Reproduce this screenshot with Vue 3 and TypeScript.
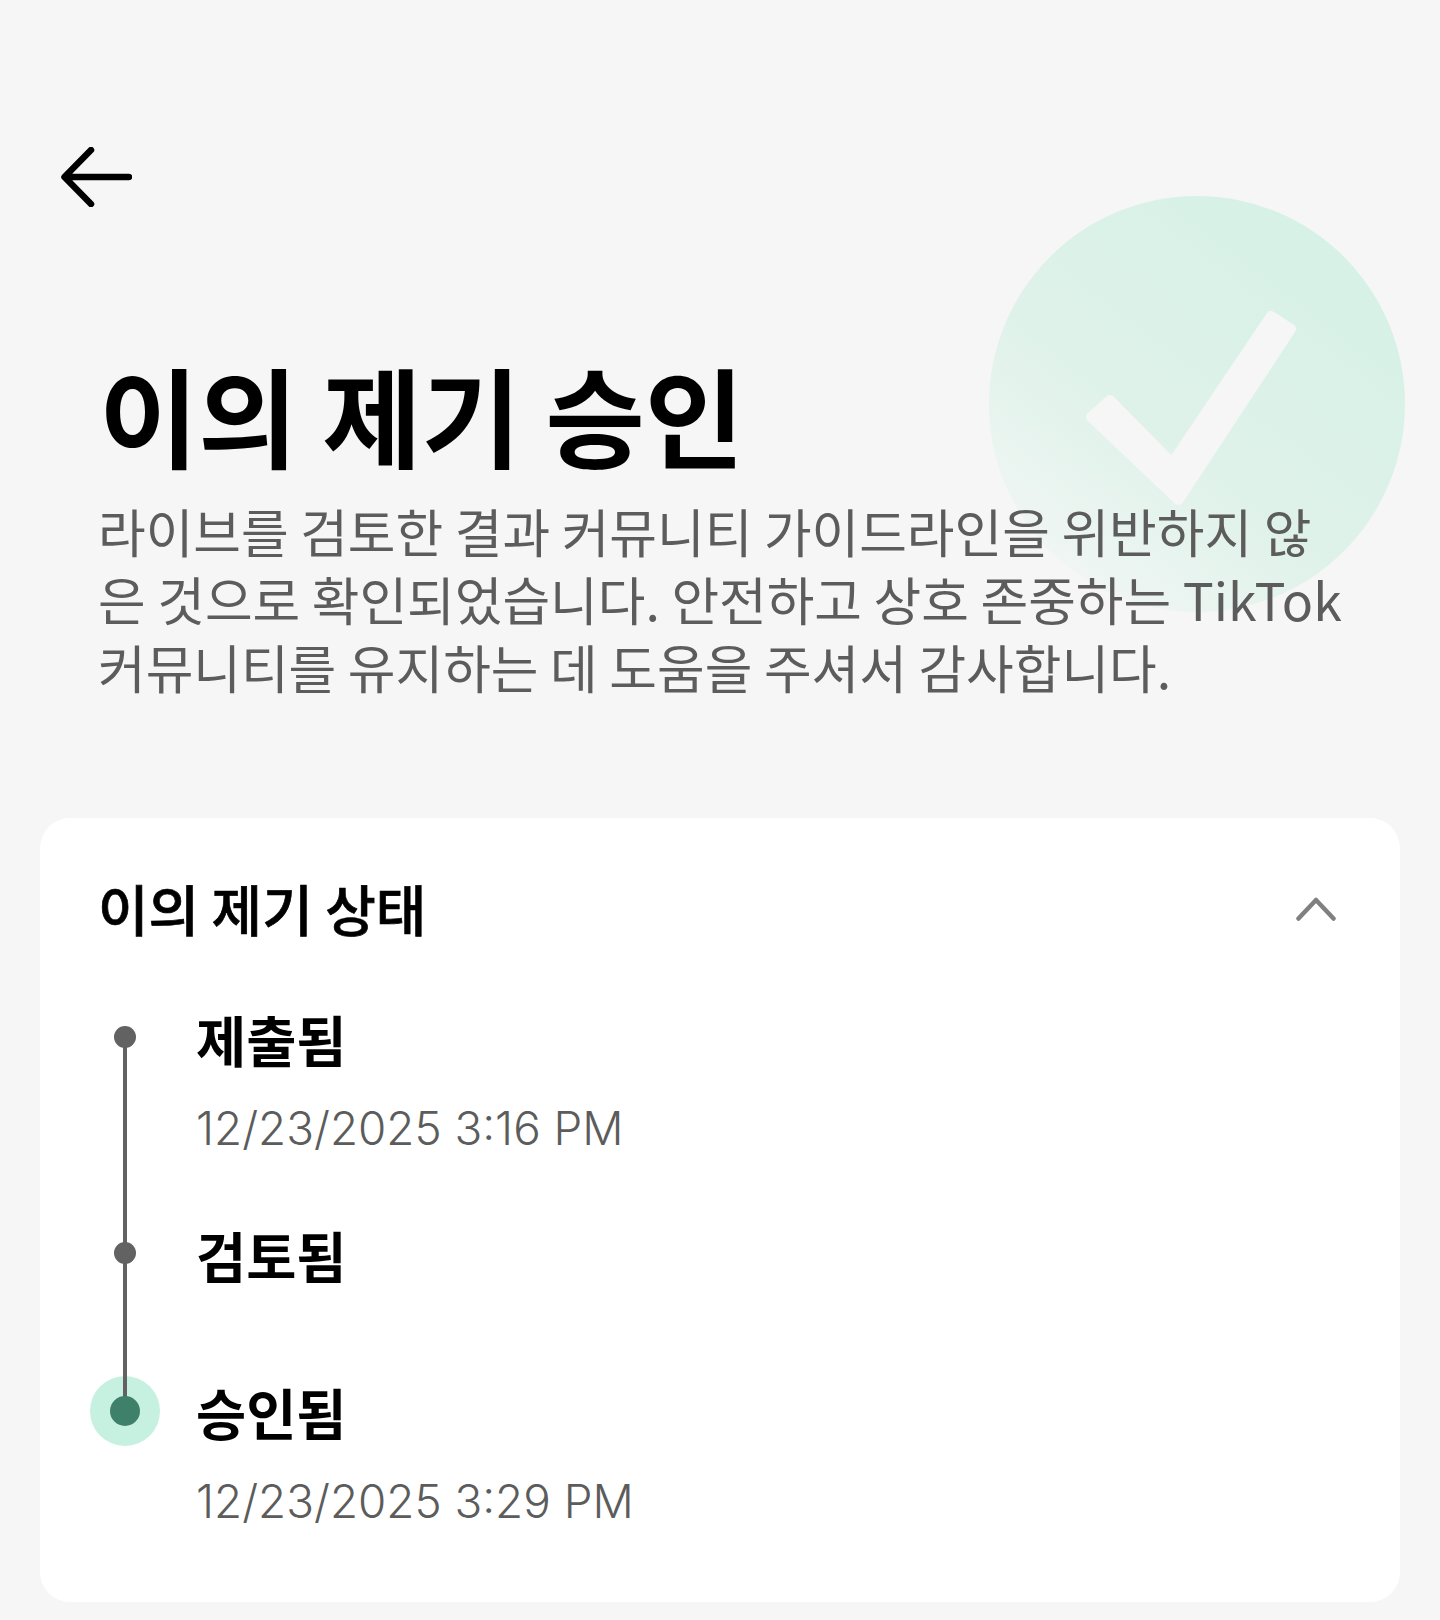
<script setup lang="ts">
interface Step {
  label: string;
  time?: string;
  current?: boolean;
}

const steps: Step[] = [
  { label: '제출됨', time: '12/23/2025 3:16 PM' },
  { label: '검토됨' },
  { label: '승인됨', time: '12/23/2025 3:29 PM', current: true },
];
</script>

<template>
  <main class="page">
    <svg class="watermark" viewBox="0 0 420 420" aria-hidden="true">
      <defs>
        <linearGradient id="wm" x1="0.85" y1="0.1" x2="0.2" y2="0.95">
          <stop offset="0" stop-color="#d6f1e6" />
          <stop offset="0.6" stop-color="#dff2ea" />
          <stop offset="1" stop-color="#f1f6f4" />
        </linearGradient>
      </defs>
      <circle cx="209" cy="209" r="208" fill="url(#wm)" />
      <polygon
        points="103,222 122,205 184,268 283,121 303,134 190.5,305"
        fill="#f6f6f6"
        stroke="#f6f6f6"
        stroke-width="10"
        stroke-linejoin="round"
      />
    </svg>

    <button class="back" type="button" aria-label="뒤로">
      <svg width="72" height="60" viewBox="0 0 72 60">
        <path
          d="M69 30 H5 M31 3 L4.5 30 L31 57"
          fill="none"
          stroke="#000"
          stroke-width="6.5"
          stroke-linecap="round"
          stroke-linejoin="round"
        />
      </svg>
    </button>

    <section class="hero">
      <h1 class="title">이의 제기 승인</h1>
      <p class="desc">
        라이브를 검토한 결과 커뮤니티 가이드라인을 위반하지 않은 것으로 확인되었습니다. 안전하고 상호 존중하는 TikTok 커뮤니티를 유지하는 데 도움을 주셔서 감사합니다.
      </p>
    </section>

    <section class="card">
      <header class="card-head">
        <h2 class="card-title">이의 제기 상태</h2>
        <svg class="chevron" width="40" height="24" viewBox="0 0 40 24">
          <path
            d="M2.5 21.5 L20 3 L37.5 21.5"
            fill="none"
            stroke="#808080"
            stroke-width="4.5"
            stroke-linecap="round"
            stroke-linejoin="round"
          />
        </svg>
      </header>

      <ol class="timeline">
        <li
          v-for="(step, i) in steps"
          :key="step.label"
          class="step"
          :class="{ 'has-time': step.time, current: step.current }"
        >
          <div class="marker">
            <span v-if="step.current" class="ring"></span>
            <span v-if="i < steps.length - 1" class="line"></span>
            <span class="dot"></span>
          </div>
          <div class="step-body">
            <div class="step-label">{{ step.label }}</div>
            <div v-if="step.time" class="step-time">{{ step.time }}</div>
          </div>
        </li>
      </ol>
    </section>
  </main>
</template>

<style scoped>
.page {
  position: relative;
  width: 1440px;
  height: 1620px;
  box-sizing: border-box;
  padding: 147px 40px 0;
  background: #f6f6f6;
  overflow: hidden;
  font-family: "Noto Sans CJK KR", "Noto Sans", sans-serif;
}

.watermark {
  position: absolute;
  left: 988px;
  top: 195px;
  width: 420px;
  height: 420px;
}

.back {
  display: block;
  position: relative;
  margin: 0 0 0 20px;
  padding: 0;
  height: 60px;
  border: 0;
  background: none;
}

.back svg {
  display: block;
}

.hero {
  position: relative;
  padding: 146px 58px 0;
}

.title {
  margin: 0 0 0 1px;
  font-size: 108px;
  line-height: 120px;
  font-weight: 700;
  color: #000;
}

.desc {
  margin: 24px 0 0;
  font-size: 51.8px;
  line-height: 68px;
  font-weight: 400;
  color: #5c5c5c;
}

.card {
  box-sizing: border-box;
  margin-top: 117px;
  height: 784px;
  padding: 54px 58px 70px;
  background: #fff;
  border-radius: 30px;
}

.card-head {
  display: flex;
  align-items: center;
  justify-content: space-between;
  height: 70px;
}

.card-title {
  margin: 0;
  font-size: 55px;
  line-height: 70px;
  font-weight: 500;
  -webkit-text-stroke: 0.7px #000;
  color: #000;
}

.chevron {
  margin: 4px 6px 0 0;
}

.timeline {
  margin: 63px 0 0;
  padding: 0;
  list-style: none;
}

.step {
  display: flex;
  gap: 45px;
  height: 157px;
}

.step.has-time {
  height: 216px;
}

.step.current {
  height: 154px;
}

.marker {
  position: relative;
  flex: 0 0 53px;
}

.dot {
  position: absolute;
  z-index: 2;
  left: 16px;
  top: 21px;
  width: 22px;
  height: 22px;
  border-radius: 50%;
  background: #626262;
}

.line {
  position: absolute;
  z-index: 1;
  left: 25px;
  top: 32px;
  width: 4px;
  height: 100%;
  background: #626262;
}

.ring {
  position: absolute;
  left: -8px;
  top: -2px;
  width: 70px;
  height: 70px;
  border-radius: 50%;
  background: #c6f1e1;
}

.current .dot {
  left: 12px;
  top: 18px;
  width: 30px;
  height: 30px;
  background: #3f806a;
}

.step-label {
  font-size: 54.5px;
  line-height: 68px;
  font-weight: 700;
  color: #000;
}

.step-time {
  margin-top: 26px;
  font-family: Inter, "Noto Sans", sans-serif;
  font-size: 45.8px;
  line-height: 60px;
  font-weight: 300;
  color: #5c5c5c;
}
</style>

<style>
body {
  background: #f6f6f6;
}
</style>
